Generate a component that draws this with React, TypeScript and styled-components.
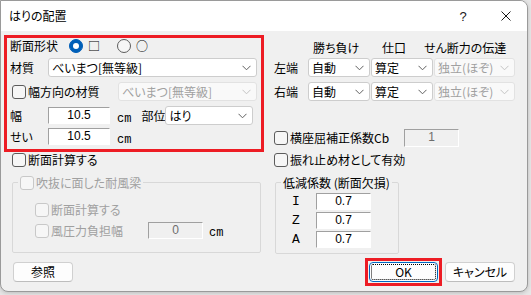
import React from "react";
import styled, { createGlobalStyle } from "styled-components";

const Global = createGlobalStyle`
  html, body { margin: 0; padding: 0; }
  body {
    background: #e6e6e6;
    font-family: "Noto Sans CJK JP", "Noto Sans", sans-serif;
    font-size: 12px;
    color: #000;
    font-feature-settings: "palt";
  }
  * { box-sizing: border-box; }
`;

const Desktop = styled.div`
  width: 531px;
  height: 295px;
  overflow: hidden;
  background: #e6e6e6;
`;

const Window = styled.div`
  width: 528px;
  height: 292px;
  display: flex;
  flex-direction: column;
  background: #f0f0f0;
  border: 1px solid #9a9a9a;
  border-radius: 0 8px 8px 8px;
  overflow: hidden;
  box-shadow: 0 1px 4px rgba(0, 0, 0, 0.18);
`;

const TitleBar = styled.div`
  height: 30px;
  flex: none;
  display: flex;
  align-items: center;
  background: #ffffff;
  padding-left: 8px;
`;

const Title = styled.div`
  flex: 1;
  line-height: 16px;
`;

const CaptionButton = styled.div<{ $w: number }>`
  width: ${(p) => p.$w}px;
  height: 30px;
  display: flex;
  align-items: center;
  justify-content: center;
  font-family: "Liberation Sans", sans-serif;
  font-size: 13px;
  color: #1a1a1a;
`;

const Body = styled.div`
  flex: 1;
  display: flex;
  flex-direction: column;
  padding: 4px 0 0 3px;
`;

const Columns = styled.div`
  display: flex;
  gap: 10px;
  align-items: flex-start;
`;

const LeftCol = styled.div`
  width: 260px;
  flex: none;
  display: flex;
  flex-direction: column;
`;

const RightCol = styled.div`
  flex: 1;
  display: flex;
  flex-direction: column;
`;

const RedBox = styled.div`
  height: 117px;
  border: 3px solid #ed1c24;
  padding: 0 3px 3px;
  display: grid;
  grid-template-rows: 20px 24px 24px 21px 19px;
  align-items: start;
`;

const Row = styled.div<{ $h?: number; $mt?: number; $ml?: number }>`
  display: flex;
  align-items: center;
  height: ${(p) => p.$h ?? 19}px;
  margin-top: ${(p) => p.$mt ?? 0}px;
  margin-left: ${(p) => p.$ml ?? 0}px;
`;

const Label = styled.span<{ $w?: number; $ml?: number; $disabled?: boolean }>`
  ${(p) => (p.$w ? `width: ${p.$w}px;` : "")}
  flex: none;
  margin-left: ${(p) => p.$ml ?? 0}px;
  line-height: 16px;
  white-space: nowrap;
  color: ${(p) => (p.$disabled ? "#a0a0a0" : "#000")};
`;

const Unit = styled.span<{ $ml: number }>`
  align-self: flex-end;
  margin-left: ${(p) => p.$ml}px;
  font-family: "Liberation Mono", monospace;
  font-size: 12px;
  line-height: 14px;
  margin-bottom: -1px;
`;

const RadioOption = styled.span<{ $ml: number }>`
  display: flex;
  align-items: center;
  gap: 5px;
  margin-left: ${(p) => p.$ml}px;
`;

const Radio = styled.span<{ $checked?: boolean }>`
  width: 14px;
  height: 14px;
  flex: none;
  border-radius: 50%;
  display: flex;
  align-items: center;
  justify-content: center;
  background: ${(p) => (p.$checked ? "#005fb8" : "#f6f6f6")};
  border: 1px solid ${(p) => (p.$checked ? "#005fb8" : "#5c5c5c")};
  &::after {
    content: "";
    display: ${(p) => (p.$checked ? "block" : "none")};
    width: 6px;
    height: 6px;
    border-radius: 50%;
    background: #ffffff;
  }
`;

const Glyph = styled.span`
  line-height: 16px;
`;

const CheckBox = styled.span<{ $disabled?: boolean }>`
  width: 14px;
  height: 14px;
  flex: none;
  border-radius: 3px;
  border: 1px solid ${(p) => (p.$disabled ? "#c8c8c8" : "#5c5c5c")};
  background: #f6f6f6;
  margin-right: 2px;
`;

const SelectBox = styled.div<{ $w?: number; $disabled?: boolean }>`
  width: ${(p) => (p.$w ? `${p.$w}px` : "100%")};
  height: 19px;
  flex: none;
  display: flex;
  align-items: center;
  justify-content: space-between;
  padding: 0 5px 0 3px;
  background: ${(p) => (p.$disabled ? "#f9f9f9" : "#ffffff")};
  border: 1px solid ${(p) => (p.$disabled ? "#e2e2e2" : "#cdcdcd")};
  border-radius: 3px;
  color: ${(p) => (p.$disabled ? "#a0a0a0" : "#000")};
  line-height: 16px;
  white-space: nowrap;
  overflow: hidden;
`;

const Chevron = ({ disabled }: { disabled?: boolean }) => (
  <svg width="9" height="6" viewBox="0 0 9 6" style={{ flex: "none" }}>
    <polyline
      points="0.5,0.8 4.5,4.8 8.5,0.8"
      fill="none"
      stroke={disabled ? "#c4c4c4" : "#606060"}
      strokeWidth="1"
    />
  </svg>
);

const Select = ({ value, w, disabled }: { value: string; w?: number; disabled?: boolean }) => (
  <SelectBox $w={w} $disabled={disabled}>
    <span>{value}</span>
    <Chevron disabled={disabled} />
  </SelectBox>
);

const Edit = styled.div<{ $w: number; $h?: number; $disabled?: boolean }>`
  width: ${(p) => p.$w}px;
  height: ${(p) => p.$h ?? 17}px;
  flex: none;
  background: ${(p) => (p.$disabled ? "#f0f0f0" : "#ffffff")};
  border-top: 1px solid #a0a0a0;
  border-left: 1px solid #a0a0a0;
  border-right: 1px solid #ffffff;
  border-bottom: 1px solid #ffffff;
  text-align: center;
  font-family: "Liberation Sans", sans-serif;
  font-size: 12px;
  line-height: 13px;
  padding-top: 1px;
  color: ${(p) => (p.$disabled ? "#6d6d6d" : "#000")};
`;

const SideGrid = styled.div`
  display: grid;
  grid-template-columns: 33px 62px 62px 81px;
  grid-template-rows: 23px 24px 19px;
  column-gap: 1px;
  align-items: start;
`;

const ColHead = styled.div<{ $ml: number }>`
  align-self: end;
  padding-bottom: 2px;
  margin-left: ${(p) => p.$ml}px;
  line-height: 16px;
  white-space: nowrap;
`;

const SideLabel = styled.div`
  line-height: 19px;
  white-space: nowrap;
`;

const Group = styled.fieldset<{ $w: number; $ml: number; $pad: string }>`
  margin: 8px 0 0 ${(p) => p.$ml}px;
  width: ${(p) => p.$w}px;
  min-width: 0;
  padding: ${(p) => p.$pad};
  border: 1px solid #d8d8d8;
  border-radius: 2px;
  display: flex;
  flex-direction: column;
`;

const GroupLegend = styled.legend<{ $ml: number; $disabled?: boolean }>`
  display: flex;
  align-items: center;
  height: 13px;
  line-height: 13px;
  padding: 0 2px;
  margin-left: ${(p) => p.$ml}px;
  white-space: nowrap;
  color: ${(p) => (p.$disabled ? "#a0a0a0" : "#000")};
`;

const GroupRows = styled.div<{ $gap: number }>`
  display: flex;
  flex-direction: column;
  gap: ${(p) => p.$gap}px;
`;

const CoefLabel = styled.span`
  width: 40px;
  text-align: center;
  font-family: "Liberation Mono", monospace;
  font-size: 13px;
  line-height: 17px;
`;

const Footer = styled.div`
  display: flex;
  align-items: center;
  justify-content: space-between;
  height: 28px;
  margin-top: 4px;
  padding: 0 12px 0 9px;
`;

const FooterRight = styled.div`
  display: flex;
  align-items: center;
  gap: 3px;
`;

const Highlight = styled.div`
  border: 3px solid #ed1c24;
  padding: 1px;
  display: flex;
`;

const Button = styled.div<{ $w: number; $focus?: boolean }>`
  width: ${(p) => p.$w}px;
  height: 20px;
  display: flex;
  align-items: center;
  justify-content: center;
  background: #fdfdfd;
  border: 1px solid ${(p) => (p.$focus ? "#0067c0" : "#d0d0d0")};
  border-bottom-color: ${(p) => (p.$focus ? "#0067c0" : "#bdbdbd")};
  border-radius: 4px;
  line-height: 16px;
  outline: ${(p) => (p.$focus ? "1px dotted #000" : "none")};
  outline-offset: -3px;
`;

export default function App() {
  return (
    <>
      <Global />
      <Desktop>
        <Window>
          <TitleBar>
            <Title>はりの配置</Title>
            <CaptionButton $w={44}>?</CaptionButton>
            <CaptionButton $w={42}>
              <svg width="10" height="10" viewBox="0 0 10 10">
                <path d="M0.5 0.5 L9.5 9.5 M9.5 0.5 L0.5 9.5" stroke="#1a1a1a" strokeWidth="1" />
              </svg>
            </CaptionButton>
          </TitleBar>
          <Body>
            <Columns>
              <LeftCol>
                <RedBox>
                  <Row $h={16}>
                    <Label>断面形状</Label>
                    <RadioOption $ml={11}>
                      <Radio $checked />
                      <Glyph>□</Glyph>
                    </RadioOption>
                    <RadioOption $ml={17}>
                      <Radio />
                      <Glyph>○</Glyph>
                    </RadioOption>
                  </Row>
                  <Row>
                    <Label $w={38}>材質</Label>
                    <Select value="べいまつ[無等級]" w={209} />
                  </Row>
                  <Row $ml={2}>
                    <CheckBox />
                    <Label $w={90}>幅方向の材質</Label>
                    <Select value="べいまつ[無等級]" w={139} disabled />
                  </Row>
                  <Row>
                    <Label $w={38}>幅</Label>
                    <Edit $w={62}>10.5</Edit>
                    <Unit $ml={7}>cm</Unit>
                    <Label $ml={10}>部位</Label>
                    <Select value="はり" w={88} />
                  </Row>
                  <Row>
                    <Label $w={38}>せい</Label>
                    <Edit $w={62}>10.5</Edit>
                    <Unit $ml={7}>cm</Unit>
                  </Row>
                </RedBox>
                <Row $h={16} $ml={8}>
                  <CheckBox />
                  <Label>断面計算する</Label>
                </Row>
                <Group $w={249} $ml={8} $pad="13px 0 13px 22px">
                  <GroupLegend $ml={-17} $disabled>
                    <CheckBox $disabled />
                    吹抜に面した耐風梁
                  </GroupLegend>
                  <GroupRows $gap={4}>
                    <Row $h={16}>
                      <CheckBox $disabled />
                      <Label $disabled>断面計算する</Label>
                    </Row>
                    <Row $h={17}>
                      <CheckBox $disabled />
                      <Label $w={97} $disabled>風圧力負担幅</Label>
                      <Edit $w={55} $disabled>0</Edit>
                      <Unit $ml={6}>cm</Unit>
                    </Row>
                  </GroupRows>
                </Group>
              </LeftCol>
              <RightCol>
                <SideGrid>
                  <span />
                  <ColHead $ml={5}>勝ち負け</ColHead>
                  <ColHead $ml={11}>仕口</ColHead>
                  <ColHead $ml={-10}>せん断力の伝達</ColHead>
                  <SideLabel>左端</SideLabel>
                  <Select value="自動" />
                  <Select value="算定" />
                  <Select value="独立(ほぞ)" disabled />
                  <SideLabel>右端</SideLabel>
                  <Select value="自動" />
                  <Select value="算定" />
                  <Select value="独立(ほぞ)" disabled />
                </SideGrid>
                <Row $h={18} $mt={28}>
                  <CheckBox />
                  <Label $w={114}>横座屈補正係数Cb</Label>
                  <Edit $w={55} $h={18} $disabled>1</Edit>
                </Row>
                <Row $h={16} $mt={5}>
                  <CheckBox />
                  <Label>振れ止め材として有効</Label>
                </Row>
                <Group $w={124} $ml={1} $pad="4px 0 5px 0">
                  <GroupLegend $ml={5}>低減係数 (断面欠損)</GroupLegend>
                  <GroupRows $gap={2}>
                    <Row $h={17}>
                      <CoefLabel>I</CoefLabel>
                      <Edit $w={55}>0.7</Edit>
                    </Row>
                    <Row $h={17}>
                      <CoefLabel>Z</CoefLabel>
                      <Edit $w={55}>0.7</Edit>
                    </Row>
                    <Row $h={17}>
                      <CoefLabel>A</CoefLabel>
                      <Edit $w={55}>0.7</Edit>
                    </Row>
                  </GroupRows>
                </Group>
              </RightCol>
            </Columns>
            <Footer>
              <Button $w={60}>参照</Button>
              <FooterRight>
                <Highlight>
                  <Button $w={69} $focus>OK</Button>
                </Highlight>
                <Button $w={70}>キャンセル</Button>
              </FooterRight>
            </Footer>
          </Body>
        </Window>
      </Desktop>
    </>
  );
}
